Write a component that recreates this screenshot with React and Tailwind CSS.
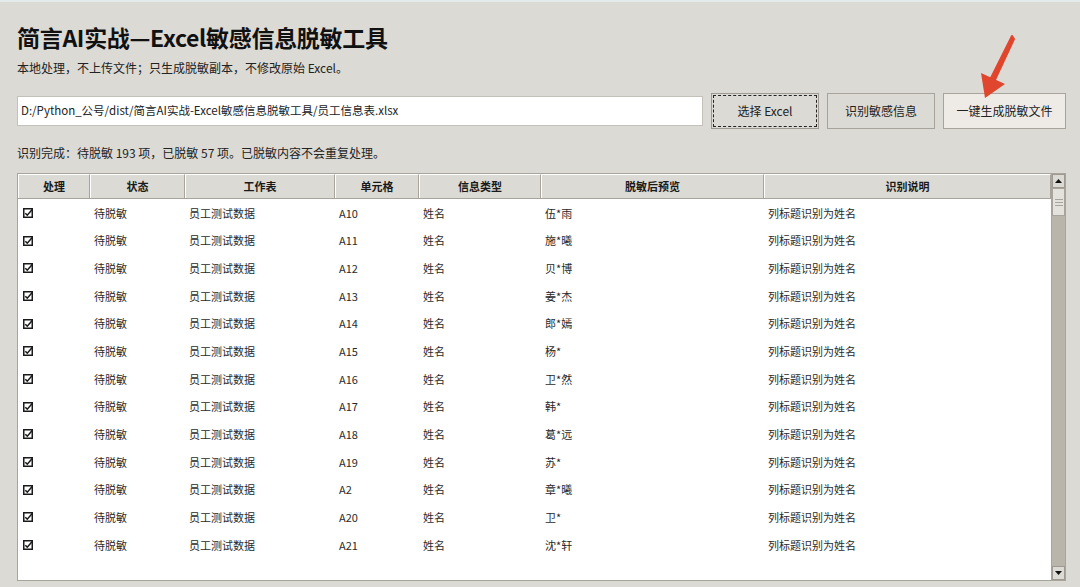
import React from 'react'

const rows = [
  ['A10', '伍*雨'],
  ['A11', '施*曦'],
  ['A12', '贝*博'],
  ['A13', '姜*杰'],
  ['A14', '郎*嫣'],
  ['A15', '杨*'],
  ['A16', '卫*然'],
  ['A17', '韩*'],
  ['A18', '葛*远'],
  ['A19', '苏*'],
  ['A2', '章*曦'],
  ['A20', '卫*'],
  ['A21', '沈*轩'],
]

const headers = ['处理', '状态', '工作表', '单元格', '信息类型', '脱敏后预览', '识别说明']
const cols = 'grid grid-cols-[72px_95px_150px_84px_122px_223px_1fr]'

function Check() {
  return (
    <svg width="10" height="10" viewBox="0 0 10 10" className="block">
      <rect x="0.75" y="0.75" width="8.5" height="8.5" fill="none" stroke="#1a1a1a" strokeWidth="1.5" />
      <path d="M2.3 5.2 L4.3 7.2 L9.5 1.2" fill="none" stroke="#1a1a1a" strokeWidth="1.6" />
    </svg>
  )
}

export default function App() {
  return (
    <div
      className="relative w-[1080px] h-[587px] overflow-hidden bg-[#dcdad5] text-[#1a1a1a]"
      style={{ fontFamily: '"Noto Sans CJK SC", "Noto Sans", sans-serif' }}
    >
      <div className="h-[2px] bg-[#e3eaea]" />
      <div className="pl-[17px] pr-[14px]">
        <h1 className="mt-[19px] text-[23px] leading-[33px] font-bold tracking-[-0.3px] text-[#111]">
          简言AI实战—Excel敏感信息脱敏工具
        </h1>
        <p className="mt-[4px] text-[12px] leading-[20px] text-[#222]">
          本地处理，不上传文件；只生成脱敏副本，不修改原始 Excel。
        </p>

        <div className="mt-[15px] flex items-center gap-[8px]">
          <div className="flex-1 h-[30px] bg-white border border-[#c4c1ba] flex items-center px-[3px] text-[11.5px] text-[#222]">
            D:/Python_公号/dist/简言AI实战-Excel敏感信息脱敏工具/员工信息表.xlsx
          </div>
          <button className="relative w-[108px] h-[36px] border border-[#9e9a91] bg-[#dcdad5] text-[12px] text-[#222]">
            <span className="absolute inset-[1px] border border-dashed border-[#222]" />
            选择 Excel
          </button>
          <button className="w-[108px] h-[36px] border border-[#a8a49c] bg-[#dcdad5] text-[12px] text-[#222]">
            识别敏感信息
          </button>
          <button className="w-[123px] h-[36px] border border-[#a8a49c] bg-[#eeebe7] text-[12px] text-[#222]">
            一键生成脱敏文件
          </button>
        </div>

        <p className="mt-[14px] text-[12px] leading-[20px] text-[#222]">
          识别完成：待脱敏 193 项，已脱敏 57 项。已脱敏内容不会重复处理。
        </p>

        <div className="mt-[10px] h-[408px] border border-[#a8a49c] bg-white flex">
          <div className="flex-1 flex flex-col text-[11px] text-[#2a2a2a]">
            <div className={`${cols} h-[25px] bg-[#dcdad5] border-b border-[#a8a49c]`}>
              {headers.map(h => (
                <div
                  key={h}
                  className="flex items-center justify-center font-bold border-t border-l border-t-white border-l-white border-r border-r-[#a8a49c] text-[#1a1a1a]"
                >
                  {h}
                </div>
              ))}
            </div>
            {rows.map(([cell, preview]) => (
              <div key={cell} className={`${cols} h-[27.7px] items-center`}>
                <div className="pl-[5px]"><Check /></div>
                <div className="pl-[4px]">待脱敏</div>
                <div className="pl-[4px]">员工测试数据</div>
                <div className="pl-[4px]">{cell}</div>
                <div className="pl-[4px]">姓名</div>
                <div className="pl-[4px]">{preview}</div>
                <div className="pl-[4px]">列标题识别为姓名</div>
              </div>
            ))}
          </div>

          <div className="w-[14px] flex flex-col bg-[#bab5ab] border-l border-[#a8a49c]">
            <div className="h-[14px] bg-[#dcdad5] border border-[#9e9a91] flex items-center justify-center">
              <svg width="7" height="4" viewBox="0 0 7 4"><path d="M0 4 L3.5 0 L7 4 Z" fill="#111" /></svg>
            </div>
            <div className="h-[28px] bg-[#e4e2dd] border border-[#a8a49c] flex flex-col items-center justify-center gap-[2px]">
              <div className="w-[8px] h-px bg-[#a8a49c]" />
              <div className="w-[8px] h-px bg-[#a8a49c]" />
              <div className="w-[8px] h-px bg-[#a8a49c]" />
            </div>
            <div className="flex-1" />
            <div className="h-[14px] bg-[#dcdad5] border border-[#9e9a91] flex items-center justify-center">
              <svg width="7" height="4" viewBox="0 0 7 4"><path d="M0 0 L7 0 L3.5 4 Z" fill="#111" /></svg>
            </div>
          </div>
        </div>
      </div>

      <svg className="absolute left-[970px] top-[30px]" width="50" height="75" viewBox="970 30 50 75">
        <path d="M1012 36 L1014 39 L993 84 L989 82 Z" fill="#e0452d" stroke="#e0452d" strokeWidth="2" strokeLinejoin="round" />
        <path d="M981 73 L1005 84 L985 98 Z" fill="#e0452d" />
      </svg>
    </div>
  )
}
